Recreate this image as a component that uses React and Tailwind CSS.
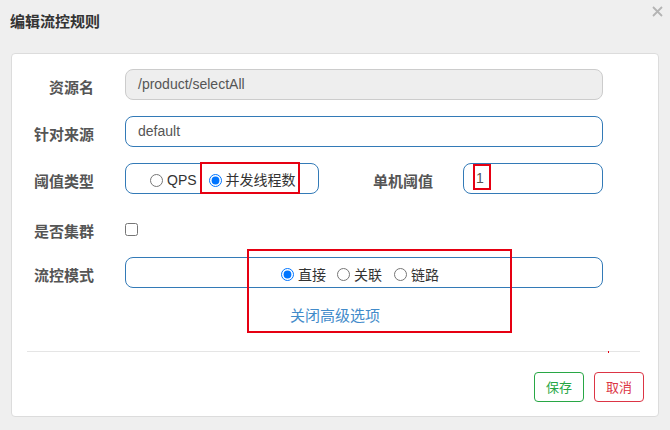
import React from 'react'

const cjk = "font-['Noto_Sans_CJK_SC',sans-serif]";
const latin = "font-['Liberation_Sans','Noto_Sans_CJK_SC',sans-serif]";

const Label = ({ children, width = 'w-[82px]' }) => (
    <label className={`${width} shrink-0 pt-[5px] text-right text-[15px] font-bold text-[#555] ${cjk}`}>
        {children}
    </label>
);

const Radio = ({ label, checked, name, className = '' }) => (
    <label className={`flex items-center gap-[4px] text-[14px] text-[#333] ${className}`}>
        <input type="radio" name={name} defaultChecked={checked} className="m-0 w-[13px] h-[13px]" />
        <span>{label}</span>
    </label>
);

const App = () => {
    return (
        <div className="relative w-[670px] h-[430px] bg-[#efefef] overflow-hidden">
            {/* header */}
            <div className="h-[53px] pl-[10px] pt-[11px]">
                <h4 className={`text-[15px] font-bold text-[#333] leading-[20px] ${cjk}`}>编辑流控规则</h4>
            </div>
            <button className="absolute top-[6px] left-[652px] w-[11px] h-[11px]">
                <svg viewBox="0 0 11 11" className="w-[11px] h-[11px]">
                    <path d="M1 1 L10 10 M10 1 L1 10" stroke="#b4b4b4" strokeWidth="1.8" fill="none" />
                </svg>
            </button>

            {/* form card */}
            <div className="ml-[11px] w-[648px] h-[364px] bg-white border border-[#dcdcdc] rounded-[4px] pt-[15px] flex flex-col">
                <div className="flex flex-col gap-[16px]">
                    <div className="flex items-center h-[31px]">
                        <Label>资源名</Label>
                        <div className={`ml-[31px] w-[478px] h-[31px] flex items-center px-[12px] bg-[#eeeeee] border border-[#cccccc] rounded-[8px] text-[14px] text-[#555] ${latin}`}>
                            /product/selectAll
                        </div>
                    </div>
                    <div className="flex items-center h-[31px]">
                        <Label>针对来源</Label>
                        <div className={`ml-[31px] w-[478px] h-[31px] flex items-center px-[12px] border border-[#337ab7] rounded-[8px] text-[14px] text-[#555] ${latin}`}>
                            default
                        </div>
                    </div>
                    <div className="flex items-center h-[31px]">
                        <Label>阈值类型</Label>
                        <div className={`ml-[31px] w-[194px] h-[31px] flex items-center pl-[24px] pt-[4px] border border-[#337ab7] rounded-[8px] ${latin}`}>
                            <Radio name="grade" label="QPS" />
                            <Radio name="grade" label="并发线程数" checked className="ml-[12px]" />
                        </div>
                        <Label width="w-[114px]">单机阈值</Label>
                        <div className={`ml-[30px] w-[140px] h-[31px] flex items-center px-[12px] border border-[#337ab7] rounded-[8px] text-[14px] text-[#555] ${latin}`}>
                            1
                        </div>
                    </div>
                    <div className="flex items-center h-[31px] pt-[6px]">
                        <Label>是否集群</Label>
                        <input type="checkbox" className="ml-[31px] m-0 mt-[2px] w-[13px] h-[13px]" />
                    </div>
                    <div className="flex items-center h-[31px]">
                        <Label>流控模式</Label>
                        <div className={`ml-[31px] w-[478px] h-[31px] flex items-center pl-[155px] pt-[4px] border border-[#337ab7] rounded-[8px] ${cjk}`}>
                            <Radio name="strategy" label="直接" checked />
                            <Radio name="strategy" label="关联" className="ml-[11px]" />
                            <Radio name="strategy" label="链路" className="ml-[12px]" />
                        </div>
                    </div>
                </div>

                <div className="mt-[15px] h-[20px] pl-[278px]">
                    <a className={`text-[15px] leading-[20px] text-[#428bca] ${cjk}`}>关闭高级选项</a>
                </div>

                <div className="mt-[28px] ml-[15px] w-[613px] h-[1px] bg-[#e5e5e5]" />

                <div className={`mt-[20px] pr-[14px] flex justify-end gap-[10px] ${cjk}`}>
                    <button className="w-[50px] h-[30px] bg-white border border-[#28a745] rounded-[4px] text-[13px] text-[#28a745]">保存</button>
                    <button className="w-[50px] h-[30px] bg-white border border-[#dc3545] rounded-[4px] text-[13px] text-[#dc3545]">取消</button>
                </div>
            </div>

            {/* red annotation boxes */}
            <div className="absolute left-[200px] top-[162px] w-[100px] h-[32px] border-2 border-[#e60012]" />
            <div className="absolute left-[473px] top-[164px] w-[18px] h-[26px] border-2 border-[#e60012]" />
            <div className="absolute left-[247px] top-[249px] w-[265px] h-[84px] border-2 border-[#e60012]" />
            <div className="absolute left-[608px] top-[351px] w-[1px] h-[2px] bg-[#e60012]" />
        </div>
    )
}

export default App
